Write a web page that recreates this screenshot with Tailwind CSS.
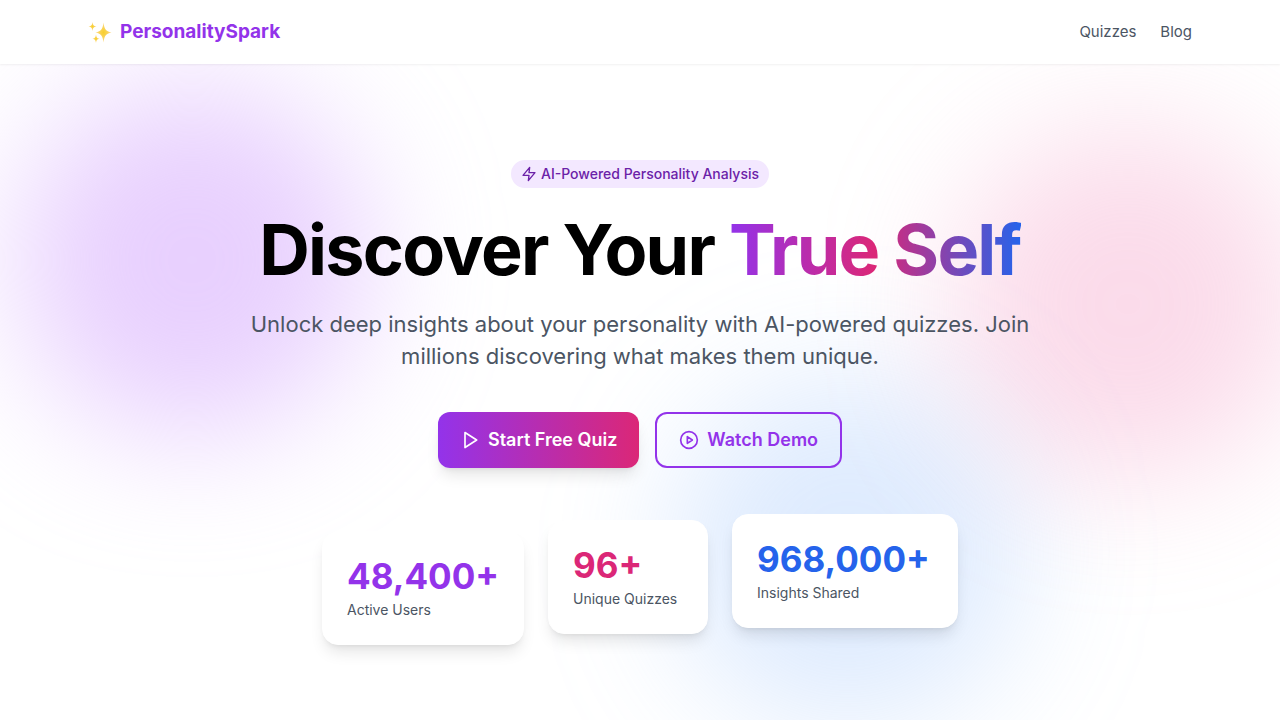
<!DOCTYPE html>
<html lang="en">
<head>
<meta charset="utf-8">
<meta name="viewport" content="width=device-width, initial-scale=1">
<title>PersonalitySpark</title>
<script src="https://cdn.jsdelivr.net/npm/@tailwindcss/browser@4"></script>
</head>
<body class="flex min-h-screen flex-col bg-white font-['Inter','Liberation_Sans',sans-serif] text-black">
<header class="relative z-10 bg-white shadow-[0_1px_2px_rgba(0,0,0,0.06)]">
  <div class="mx-auto flex h-16 max-w-6xl items-center justify-between px-6">
    <a href="#" class="flex items-center gap-2 text-[19px] leading-8 font-bold text-[#9333ea]">
      <svg class="size-6" viewBox="0 0 24 24" aria-hidden="true">
        <defs><radialGradient id="gold"><stop offset="0" stop-color="#f8cf2c"/><stop offset="1" stop-color="#fbd98a"/></radialGradient></defs>
        <g fill="url(#gold)">
          <path d="M15.500 2.500C16.500 9.500 17.500 11 23.500 12.500C17.500 14 16.500 15.500 15.500 22.500C14.500 15.500 13.500 14 7.500 12.500C13.500 11 14.500 9.500 15.500 2.500Z"/>
          <path d="M4.500 2C5 5.200 5.600 6 8.500 6.500C5.600 7 5 7.800 4.500 11C4 7.800 3.400 7 .5 6.500C3.400 6 4 5.200 4.500 2Z"/>
          <path d="M8 14.500C8.500 17.500 9 18.200 11.500 18.700C9 19.200 8.500 20 8 23C7.500 20 7 19.200 4.500 18.700C7 18.200 7.500 17.500 8 14.500Z"/>
        </g>
      </svg>
      PersonalitySpark
    </a>
    <nav class="flex gap-6 text-[15px] leading-6 text-[#4b5563]">
      <a href="#quizzes">Quizzes</a>
      <a href="#blog">Blog</a>
    </nav>
  </div>
</header>
<main class="relative flex-1 overflow-hidden px-6 py-24">
  <div class="absolute top-5 left-4 size-88 rounded-full bg-[#d8b0fd]/60 blur-3xl"></div>
  <div class="absolute top-16 -right-6 size-88 rounded-full bg-[#f59ac5]/36 blur-3xl"></div>
  <div class="absolute top-78 left-[672px] size-88 rounded-full bg-[#8dbafb]/29 blur-3xl"></div>
  <section class="relative mx-auto flex max-w-5xl flex-col items-center text-center">
    <div class="flex h-7 items-center gap-1 rounded-full bg-[#f3e8ff] px-2.5 text-sm font-medium text-[#6b21a8]">
      <svg class="size-4" viewBox="0 0 24 24" fill="none" stroke="currentColor" stroke-width="2" stroke-linecap="round" stroke-linejoin="round" aria-hidden="true"><path d="M13 2L3 14h9l-1 8 10-12h-9z"/></svg>
      AI-Powered Personality Analysis
    </div>
    <h1 class="mt-6 text-[70px] leading-[76px] font-bold tracking-tight">Discover Your <span class="bg-linear-to-r/srgb from-[#9333ea] via-[#db2777] to-[#2563eb] bg-clip-text text-transparent">True Self</span></h1>
    <p class="mt-5 max-w-[800px] text-[22px] leading-8 text-[#4b5563]">Unlock deep insights about your personality with AI-powered quizzes. Join millions discovering what makes them unique.</p>
    <div class="mt-10 flex flex-wrap justify-center gap-4 text-lg font-semibold">
      <button type="button" class="flex h-14 items-center gap-2 rounded-xl bg-linear-to-r/srgb from-[#9333ea] to-[#db2777] px-[22px] text-white shadow-lg">
        <svg class="size-5" viewBox="0 0 24 24" fill="none" stroke="currentColor" stroke-width="2" stroke-linecap="round" stroke-linejoin="round" aria-hidden="true"><path d="M6 3l14 9-14 9z"/></svg>
        Start Free Quiz
      </button>
      <button type="button" class="flex h-14 items-center gap-2 rounded-xl border-2 border-[#9333ea] px-[22px] text-[#9333ea]">
        <svg class="size-5" viewBox="0 0 24 24" fill="none" stroke="currentColor" stroke-width="2" stroke-linecap="round" stroke-linejoin="round" aria-hidden="true"><circle cx="12" cy="12" r="10"/><path d="M10 8l6 4-6 4z"/></svg>
        Watch Demo
      </button>
    </div>
    <div class="mt-[46px] flex items-start justify-center gap-6 text-left">
      <div class="mt-[17px] rounded-2xl border border-white bg-white p-6 shadow-lg">
        <div class="mb-1 text-[35px] leading-10 font-bold text-[#9333ea]">48,400+</div>
        <div class="text-sm text-[#4b5563]">Active Users</div>
      </div>
      <div class="mt-1.5 w-40 rounded-2xl border border-white bg-white p-6 shadow-lg">
        <div class="mb-1 text-[35px] leading-10 font-bold text-[#db2777]">96+</div>
        <div class="text-sm text-[#4b5563]">Unique Quizzes</div>
      </div>
      <div class="w-[226px] rounded-2xl border border-white bg-white p-6 shadow-lg">
        <div class="mb-1 text-[35px] leading-10 font-bold text-[#2563eb]">968,000+</div>
        <div class="text-sm text-[#4b5563]">Insights Shared</div>
      </div>
    </div>
  </section>
</main>
</body>
</html>
